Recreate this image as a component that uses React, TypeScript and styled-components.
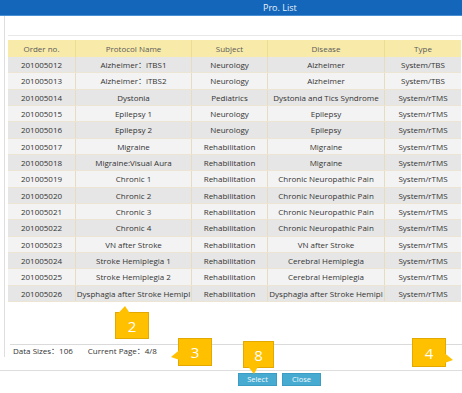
import React from 'react';
import styled, { createGlobalStyle } from 'styled-components';

const GlobalStyle = createGlobalStyle`
  html, body {
    margin: 0;
    padding: 0;
    background: #ffffff;
  }
  body {
    font-family: "Open Sans", "Noto Sans", "Noto Sans CJK SC", sans-serif;
  }
`;

const Window = styled.div`
  position: relative;
  width: 462px;
  height: 393px;
  overflow: hidden;
  background: #ffffff;
  display: flex;
  flex-direction: column;
`;

const TitleBar = styled.div`
  height: 15px;
  background: #1366b9;
  border-bottom: 1px solid #4a8fd2;
  color: #e8f1fb;
  font-size: 9px;
  line-height: 15px;
  padding-left: 263px;
`;

const Body = styled.div`
  margin-left: 4px;
  border-left: 1px solid #dedede;
  height: 341px;
  padding-left: 3px;
  display: flex;
  flex-direction: column;
`;

const Toolbar = styled.div`
  height: 19px;
  border-bottom: 1px solid #e8e8e8;
`;

const Table = styled.div`
  margin-top: 4px;
  width: 453px;
  display: flex;
  flex-direction: column;
`;

const COLUMNS = '68px 116px 76px 117px 76px';

const HeaderRow = styled.div`
  display: grid;
  grid-template-columns: ${COLUMNS};
  height: 17px;
  background: #f8eba9;
`;

const HeaderCell = styled.div`
  font-size: 8px;
  color: #5a5a5a;
  line-height: 17px;
  text-align: center;
  white-space: nowrap;
  overflow: hidden;
  border-right: 1px solid #ecdd95;
  &:last-child {
    border-right: none;
  }
`;

const Row = styled.div<{ $odd: boolean }>`
  display: grid;
  grid-template-columns: ${COLUMNS};
  height: 16.33px;
  box-sizing: border-box;
  background: ${p => (p.$odd ? '#e6e6e6' : '#f3f3f3')};
  border-bottom: 1px solid #ece5d3;
`;

const Cell = styled.div`
  font-size: 8px;
  color: #333333;
  line-height: 15.33px;
  text-align: center;
  white-space: nowrap;
  overflow: hidden;
  border-right: 1px solid #e6dcc2;
  &:last-child {
    border-right: none;
  }
`;

const Spacer = styled.div`
  flex: 1;
`;

const Footer = styled.div`
  margin-left: 2px;
  border-top: 1px solid #dadada;
  height: 12px;
  display: flex;
  gap: 15px;
  padding-left: 3px;
  font-size: 8px;
  line-height: 12px;
  color: #333333;
`;

const BottomBar = styled.div`
  margin-top: 13px;
  border-top: 1px solid #dedede;
  display: flex;
  gap: 5px;
  padding: 2px 0 0 238px;
`;

const Button = styled.div`
  width: 37px;
  height: 11px;
  background: #47abd1;
  border: 1px solid #3b9dc3;
  color: #f2f9fc;
  font-size: 7.5px;
  line-height: 11px;
  text-align: center;
`;

type Side = 'top' | 'left' | 'bottom' | 'right';

const Callout = styled.div<{ $x: number; $y: number; $w: number; $h: number }>`
  position: absolute;
  left: ${p => p.$x}px;
  top: ${p => p.$y}px;
  width: ${p => p.$w}px;
  height: ${p => p.$h}px;
  box-sizing: border-box;
  background: #ffc000;
  border: 1px solid #e3a900;
  color: #ffffff;
  font-size: 15px;
  display: flex;
  align-items: center;
  justify-content: center;
`;

const Pointer = styled.svg`
  position: absolute;
  overflow: visible;
`;

const pointerStyle = (side: Side, at: number): React.CSSProperties => {
  switch (side) {
    case 'top': return { left: at, top: -7, width: 12, height: 7 };
    case 'bottom': return { left: at, bottom: -7, width: 12, height: 7 };
    case 'left': return { left: -8, top: at, width: 8, height: 10 };
    case 'right': return { right: -8, top: at, width: 8, height: 10 };
  }
};

const pointerPoints: Record<Side, string> = {
  top: '0,7.5 7,0 12,7.5',
  bottom: '2,-0.5 8,7 12,-0.5',
  left: '8.5,0 0,7 8.5,10',
  right: '-0.5,0 8,7 -0.5,10',
};

interface Note {
  label: string;
  x: number;
  y: number;
  w: number;
  h: number;
  side: Side;
  at: number;
}

const notes: Note[] = [
  { label: '2', x: 115, y: 312, w: 34, h: 27, side: 'top', at: 2 },
  { label: '3', x: 178, y: 338, w: 34, h: 28, side: 'left', at: 11 },
  { label: '8', x: 243, y: 341, w: 31, h: 27, side: 'bottom', at: 2 },
  { label: '4', x: 412, y: 338, w: 34, h: 29, side: 'right', at: 14 },
];

const headers = ['Order no.', 'Protocol Name', 'Subject', 'Disease', 'Type'];

const rows: string[][] = [
  ['201005012', 'Alzheimer：iTBS1', 'Neurology', 'Alzheimer', 'System/TBS'],
  ['201005013', 'Alzheimer：iTBS2', 'Neurology', 'Alzheimer', 'System/TBS'],
  ['201005014', 'Dystonia', 'Pediatrics', 'Dystonia and Tics Syndrome', 'System/rTMS'],
  ['201005015', 'Epilepsy 1', 'Neurology', 'Epilepsy', 'System/rTMS'],
  ['201005016', 'Epilepsy 2', 'Neurology', 'Epilepsy', 'System/rTMS'],
  ['201005017', 'Migraine', 'Rehabilitation', 'Migraine', 'System/rTMS'],
  ['201005018', 'Migraine:Visual Aura', 'Rehabilitation', 'Migraine', 'System/rTMS'],
  ['201005019', 'Chronic 1', 'Rehabilitation', 'Chronic Neuropathic Pain', 'System/rTMS'],
  ['201005020', 'Chronic 2', 'Rehabilitation', 'Chronic Neuropathic Pain', 'System/rTMS'],
  ['201005021', 'Chronic 3', 'Rehabilitation', 'Chronic Neuropathic Pain', 'System/rTMS'],
  ['201005022', 'Chronic 4', 'Rehabilitation', 'Chronic Neuropathic Pain', 'System/rTMS'],
  ['201005023', 'VN after Stroke', 'Rehabilitation', 'VN after Stroke', 'System/rTMS'],
  ['201005024', 'Stroke Hemiplegia 1', 'Rehabilitation', 'Cerebral Hemiplegia', 'System/rTMS'],
  ['201005025', 'Stroke Hemiplegia 2', 'Rehabilitation', 'Cerebral Hemiplegia', 'System/rTMS'],
  ['201005026', 'Dysphagia after Stroke Hemipl', 'Rehabilitation', 'Dysphagia after Stroke Hemipl', 'System/rTMS'],
];

const App: React.FC = () => {
  return (
    <Window>
      <GlobalStyle />
      <TitleBar>Pro. List</TitleBar>
      <Body>
        <Toolbar />
        <Table>
          <HeaderRow>
            {headers.map(h => <HeaderCell key={h}>{h}</HeaderCell>)}
          </HeaderRow>
          {rows.map((r, i) => (
            <Row key={r[0]} $odd={i % 2 === 0}>
              {r.map((c, j) => <Cell key={j}>{c}</Cell>)}
            </Row>
          ))}
        </Table>
        <Spacer />
        <Footer>
          <span>Data Sizes：106</span>
          <span>Current Page：4/8</span>
        </Footer>
      </Body>
      <BottomBar>
        <Button>Select</Button>
        <Button>Close</Button>
      </BottomBar>

      {notes.map(n => (
        <Callout key={n.label} $x={n.x} $y={n.y} $w={n.w} $h={n.h}>
          {n.label}
          <Pointer style={pointerStyle(n.side, n.at)}>
            <polygon points={pointerPoints[n.side]} fill="#ffc000" />
          </Pointer>
        </Callout>
      ))}
    </Window>
  );
};

export default App;
